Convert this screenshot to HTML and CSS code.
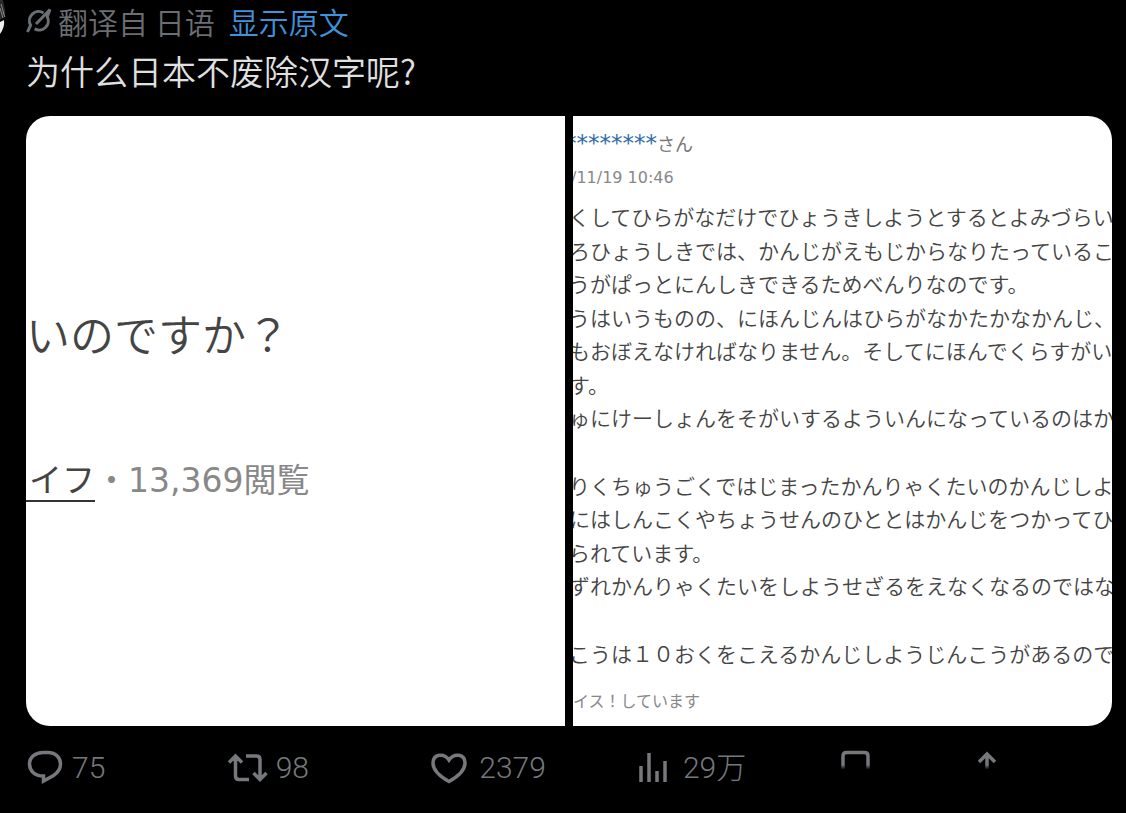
FILE: index.html
```html
<!DOCTYPE html>
<html lang="zh-CN">
<head>
  <meta charset="UTF-8" />
  <meta name="viewport" content="width=device-width, initial-scale=1.0">
  <title>为什么日本不废除汉字呢?</title>
  <link rel="stylesheet" href="styles.css">
</head>
<body>
  <svg class="avatar" viewBox="0 0 8 42" aria-hidden="true">
    <path d="M0 0H3L5 10L5 17L0 20Z" fill="#2a2a2a" />
    <path d="M1 4L4 14M0 8L3 18M3 12L5 17" stroke="#888" stroke-width="1" fill="none" />
    <path d="M0 22L4 20Q5 27 0 34Z" fill="#eee" />
  </svg>

  <article class="post">
    <div class="translate-row">
      <svg class="grok-icon" viewBox="0 0 26 26" aria-hidden="true">
        <path d="M17.500 4.900A9.200 9.200 0 0 0 4.600 17.200L1.500 24M8.600 20.900A9.200 9.200 0 0 0 21.300 8.700L24 1.500L10 16" />
      </svg>
      <span class="translate-text">翻译自 日语</span>
      <a class="translate-link" href="#">显示原文</a>
    </div>

    <h1 class="post-text">为什么日本不废除汉字呢?</h1>

    <div class="media">
      <section class="photo question" lang="ja">
        <p class="question-title">いのですか？</p>
        <p class="question-meta"><a href="#">ライフ</a>・<span>13,369閲覧</span></p>
      </section>

      <section class="photo answer" lang="ja">
        <p class="answer-user"><a href="#">********</a>さん</p>
        <p class="answer-date">/11/19 10:46</p>
        <div class="answer-body">
          <p>くしてひらがなだけでひょうきしようとするとよみづらい</p>
          <p>ろひょうしきでは、かんじがえもじからなりたっているこ</p>
          <p>うがぱっとにんしきできるためべんりなのです。</p>
          <p>うはいうものの、にほんじんはひらがなかたかなかんじ、</p>
          <p>もおぼえなければなりません。そしてにほんでくらすがい</p>
          <p>す。</p>
          <p>ゅにけーしょんをそがいするよういんになっているのはか</p>
          <p></p>
          <p>りくちゅうごくではじまったかんりゃくたいのかんじしよ</p>
          <p>にはしんこくやちょうせんのひととはかんじをつかってひ</p>
          <p>られています。</p>
          <p>ずれかんりゃくたいをしようせざるをえなくなるのではな</p>
          <p></p>
          <p>こうは１０おくをこえるかんじしようじんこうがあるので</p>
        </div>
        <p class="answer-footer">イス！しています</p>
      </section>
    </div>

    <div class="actions">
      <button type="button" class="action" aria-label="回复 75">
        <svg viewBox="0 0 38 38">
          <path d="M17 27C8.500 27 3.500 21.500 3.500 15C3.500 8 9.500 3.500 17 3.500H22C30 3.500 34.500 9 34.500 15C34.500 20 32 23.500 27.500 26.500L17.500 32V27Z" />
        </svg>
        <span>75</span>
      </button>
      <button type="button" class="action" aria-label="转发 98">
        <svg viewBox="0 0 38 38">
          <path d="M-1 13.500L5.500 7L12 13.500M5.500 7.500V27Q5.500 30.500 9 30.500H19M16 7H26.500Q30 7 30 10.500V30.500M23.500 24L30 30.500L36.500 24" />
        </svg>
        <span>98</span>
      </button>
      <button type="button" class="action" aria-label="喜欢 2379">
        <svg viewBox="0 0 38 38">
          <path d="M16 32.500C7 27.500 0 21 0 14C0 5 11 3.500 16 11C21 3.500 32 5 32 14C32 21 25 27.500 16 32.500Z" />
        </svg>
        <span>2379</span>
      </button>
      <button type="button" class="action" aria-label="查看 29万">
        <svg viewBox="0 0 38 38">
          <path d="M4 17V33M12 4V33M20 22V33M28 12V33" />
        </svg>
        <span>29万</span>
      </button>
      <button type="button" class="action faded" aria-label="书签">
        <svg viewBox="0 0 38 38">
          <path d="M2 34V7Q2 3.500 5.500 3.500H23.500Q27 3.500 27 7V34L14.500 25Z" />
        </svg>
      </button>
      <button type="button" class="action faded" aria-label="分享">
        <svg viewBox="0 0 38 38">
          <path d="M3 13L11 5L19 13M11 5V26" />
        </svg>
      </button>
    </div>
  </article>
</body>
</html>
```
FILE: styles.css
```css
* {
  margin: 0;
  padding: 0;
  box-sizing: border-box;
}

body {
  font-family: 'Noto Sans CJK SC', sans-serif;
  font-weight: 350;
  background: #000;
  color: #e0e0e0;
  min-height: 100vh;
}

a {
  text-decoration: none;
}

.avatar {
  position: absolute;
  top: 0;
  left: 0;
  width: 8px;
  height: 42px;
}

.post {
  padding: 0 14px 0 26px;
}

.translate-row {
  display: flex;
  align-items: center;
  height: 42px;
  font-size: 30px;
  line-height: 42px;
  color: #6b6e73;
}

.grok-icon {
  width: 26px;
  height: 26px;
  margin-right: 6px;
  fill: none;
  stroke: #6b6e73;
  stroke-width: 3;
}

.translate-link {
  margin-left: 14px;
  color: #3d93dc;
}

.post-text {
  font-size: 34px;
  font-weight: 350;
  line-height: 58px;
  margin-bottom: 16px;
}

.media {
  display: grid;
  grid-template-columns: 1fr 1fr;
  gap: 8px;
  aspect-ratio: 1086 / 610;
  border-radius: 24px;
  overflow: hidden;
}

.photo {
  min-width: 0;
  overflow: hidden;
  background: #fff;
  color: #444;
  font-family: 'DejaVu Sans', 'Noto Sans CJK JP', sans-serif;
  font-weight: 400;
  white-space: nowrap;
}

.question {
  padding-top: 184px;
}

.question-title {
  font-family: 'Noto Sans CJK JP', sans-serif;
  font-size: 44px;
  font-weight: 350;
  line-height: 66px;
}

.question-meta {
  margin: 82px 0 0 -30px;
  font-size: 33px;
  line-height: 66px;
  color: #888;
}

.question-meta a {
  color: #444;
  border-bottom: 2px solid #333;
}

.answer {
  display: flex;
  flex-direction: column;
  padding: 12px 0 8px;
}

.answer-user {
  margin-left: -8px;
  font-size: 18px;
  line-height: 34px;
  color: #777;
}

.answer-user a {
  font-size: 23px;
  line-height: 1;
  color: #2e6ca8;
}

.answer-date {
  margin-left: -2px;
  font-size: 16px;
  line-height: 32px;
  color: #888;
}

.answer-body {
  flex: 1;
  display: flex;
  flex-direction: column;
  margin: 6px 0 16px -4px;
  font-family: 'Noto Sans CJK JP', sans-serif;
  font-size: 21px;
  font-weight: 350;
}

.answer-body p {
  flex: 1;
  line-height: 32px;
}

.answer-footer {
  font-size: 16px;
  line-height: 32px;
  color: #888;
}

.actions {
  display: grid;
  grid-template-columns: repeat(4, 3fr) 2fr 2fr;
  height: 84px;
}

.action {
  display: flex;
  align-items: center;
  gap: 8px;
  border: none;
  background: none;
  color: #76787c;
  font-family: Roboto, 'Noto Sans CJK SC', sans-serif;
  font-size: 30px;
  font-weight: 300;
  line-height: 38px;
  cursor: pointer;
}

.action span {
  height: 38px;
}

.action svg {
  width: 38px;
  height: 38px;
  overflow: visible;
  fill: none;
  stroke: #76787c;
  stroke-width: 3.5;
}

.faded svg {
  -webkit-mask-image: linear-gradient(#000 42%, transparent 54%);
  mask-image: linear-gradient(#000 42%, transparent 54%);
}
```
